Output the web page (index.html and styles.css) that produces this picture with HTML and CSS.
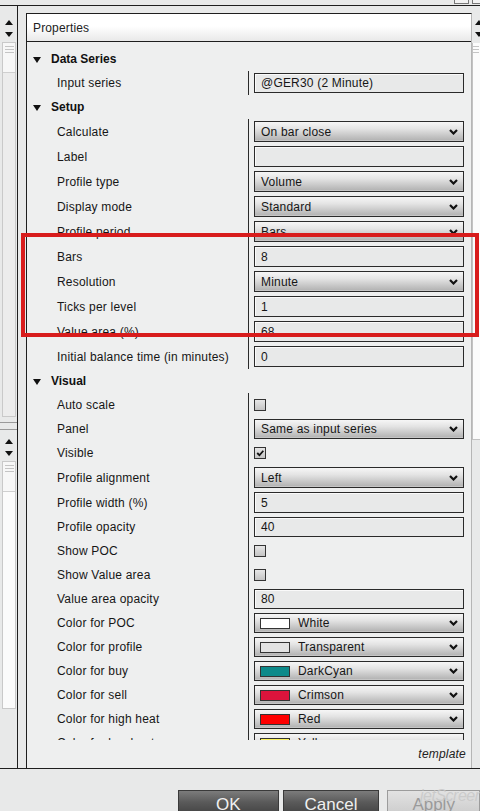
FILE: index.html
```html
<!DOCTYPE html>
<html>
<head>
<meta charset="utf-8">
<link rel="stylesheet" href="styles.css">
</head>
<body>
<div class="screen">
  <div class="titlebar"><span class="winbtn"></span><span class="winbtn"></span></div>
  <div class="workarea">
    <aside class="sidepanel">
      <div class="side-top">
        <div class="spin"><span class="tri-up"></span><span class="tri-down"></span></div>
        <div class="track"><div class="thumb"><i></i><i></i><i></i></div></div>
      </div>
      <div class="side-bottom">
        <div class="spin"><span class="tri-up"></span><span class="tri-down"></span></div>
        <div class="track white"><div class="thumb"><i></i><i></i><i></i></div></div>
      </div>
    </aside>
    <section class="props">
      <div class="props-main">
        <div class="props-header">Properties</div>
        <div class="props-grid">
          <div class="sec"><span class="tri-down big"></span>Data Series</div>
          <div class="row"><div class="lbl">Input series</div><div class="val"><div class="box">@GER30 (2 Minute)</div></div></div>
          <div class="sec"><span class="tri-down big"></span>Setup</div>
          <div class="row r25"><div class="lbl">Calculate</div><div class="val"><div class="dd"><span>On bar close</span><svg class="chev" viewBox="0 0 9 6"><polyline points="1,1 4.5,4.5 8,1"/></svg></div></div></div>
          <div class="row r25"><div class="lbl">Label</div><div class="val"><div class="box"></div></div></div>
          <div class="row r25"><div class="lbl">Profile type</div><div class="val"><div class="dd"><span>Volume</span><svg class="chev" viewBox="0 0 9 6"><polyline points="1,1 4.5,4.5 8,1"/></svg></div></div></div>
          <div class="row r25"><div class="lbl">Display mode</div><div class="val"><div class="dd"><span>Standard</span><svg class="chev" viewBox="0 0 9 6"><polyline points="1,1 4.5,4.5 8,1"/></svg></div></div></div>
          <div class="row r25"><div class="lbl">Profile period</div><div class="val"><div class="dd"><span>Bars</span><svg class="chev" viewBox="0 0 9 6"><polyline points="1,1 4.5,4.5 8,1"/></svg></div></div></div>
          <div class="row r25"><div class="lbl">Bars</div><div class="val"><div class="box">8</div></div></div>
          <div class="row r25"><div class="lbl">Resolution</div><div class="val"><div class="dd"><span>Minute</span><svg class="chev" viewBox="0 0 9 6"><polyline points="1,1 4.5,4.5 8,1"/></svg></div></div></div>
          <div class="row r25"><div class="lbl">Ticks per level</div><div class="val"><div class="box">1</div></div></div>
          <div class="row r25"><div class="lbl">Value area (%)</div><div class="val"><div class="box">68</div></div></div>
          <div class="row r25"><div class="lbl">Initial balance time (in minutes)</div><div class="val"><div class="box">0</div></div></div>
          <div class="sec"><span class="tri-down big"></span>Visual</div>
          <div class="row"><div class="lbl">Auto scale</div><div class="val"><span class="chk"></span></div></div>
          <div class="row"><div class="lbl">Panel</div><div class="val"><div class="dd"><span>Same as input series</span><svg class="chev" viewBox="0 0 9 6"><polyline points="1,1 4.5,4.5 8,1"/></svg></div></div></div>
          <div class="row"><div class="lbl">Visible</div><div class="val"><span class="chk"><svg viewBox="0 0 9 9"><polyline points="2,4.5 4,6.5 7.5,2.5"/></svg></span></div></div>
          <div class="row r25"><div class="lbl">Profile alignment</div><div class="val"><div class="dd"><span>Left</span><svg class="chev" viewBox="0 0 9 6"><polyline points="1,1 4.5,4.5 8,1"/></svg></div></div></div>
          <div class="row r25"><div class="lbl">Profile width (%)</div><div class="val"><div class="box">5</div></div></div>
          <div class="row"><div class="lbl">Profile opacity</div><div class="val"><div class="box">40</div></div></div>
          <div class="row"><div class="lbl">Show POC</div><div class="val"><span class="chk"></span></div></div>
          <div class="row"><div class="lbl">Show Value area</div><div class="val"><span class="chk"></span></div></div>
          <div class="row"><div class="lbl">Value area opacity</div><div class="val"><div class="box">80</div></div></div>
          <div class="row"><div class="lbl">Color for POC</div><div class="val"><div class="dd"><i class="sw sw-white"></i><span>White</span><svg class="chev" viewBox="0 0 9 6"><polyline points="1,1 4.5,4.5 8,1"/></svg></div></div></div>
          <div class="row"><div class="lbl">Color for profile</div><div class="val"><div class="dd"><i class="sw sw-trans"></i><span>Transparent</span><svg class="chev" viewBox="0 0 9 6"><polyline points="1,1 4.5,4.5 8,1"/></svg></div></div></div>
          <div class="row"><div class="lbl">Color for buy</div><div class="val"><div class="dd"><i class="sw sw-cyan"></i><span>DarkCyan</span><svg class="chev" viewBox="0 0 9 6"><polyline points="1,1 4.5,4.5 8,1"/></svg></div></div></div>
          <div class="row"><div class="lbl">Color for sell</div><div class="val"><div class="dd"><i class="sw sw-crimson"></i><span>Crimson</span><svg class="chev" viewBox="0 0 9 6"><polyline points="1,1 4.5,4.5 8,1"/></svg></div></div></div>
          <div class="row"><div class="lbl">Color for high heat</div><div class="val"><div class="dd"><i class="sw sw-red"></i><span>Red</span><svg class="chev" viewBox="0 0 9 6"><polyline points="1,1 4.5,4.5 8,1"/></svg></div></div></div>
          <div class="row"><div class="lbl">Color for low heat</div><div class="val"><div class="dd"><i class="sw sw-yellow"></i><span>Yellow</span><svg class="chev" viewBox="0 0 9 6"><polyline points="1,1 4.5,4.5 8,1"/></svg></div></div></div>
        </div>
        <div class="props-footer">template</div>
      </div>
      <div class="props-scroll">
        <div class="spin right"><span class="tri-up"></span><span class="tri-down"></span></div>
        <div class="vtrack"><i></i><i></i><i></i></div>
      </div>
    </section>
  </div>
  <div class="buttonbar">
    <div class="btn dark ok">OK</div>
    <div class="btn dark cancel">Cancel</div>
    <div class="btn light apply">Apply</div>
  </div>
  <div class="highlight"></div>
  <div class="watermark">jetScreenshot<sup>.com</sup></div>
</div>
</body>
</html>
```
FILE: styles.css
```css
* { box-sizing: border-box; }
html, body { margin: 0; padding: 0; }
body {
  background: #e8e9e9;
  font-family: "Liberation Sans", Arial, sans-serif;
  font-size: 12px;
  color: #161616;
}
.screen {
  position: relative;
  width: 480px;
  height: 811px;
  overflow: hidden;
  background: #e8e9e9;
}
.titlebar {
  height: 6px;
  border-bottom: 1px solid #1e1e1e;
  display: flex;
  justify-content: flex-end;
  gap: 3px;
}
.winbtn {
  width: 15px;
  height: 4px;
  border: 1px solid #777;
  border-top: none;
  background: #f2f2f2;
}
.winbtn:last-child { width: 8px; border-right: none; }
.workarea {
  display: flex;
  height: 763px;
  border-bottom: 1px solid #1e1e1e;
}
.sidepanel {
  width: 18px;
  border-right: 1px solid #1e1e1e;
  display: flex;
  flex-direction: column;
}
.side-top {
  height: 417px;
  border-bottom: 1px solid #9a9a9a;
  display: flex;
  flex-direction: column;
  padding: 8px 0 0 2px;
}
.side-bottom {
  flex: 1;
  margin-top: 6px;
  border-top: 1px solid #9a9a9a;
  display: flex;
  flex-direction: column;
  padding: 3px 0 0 2px;
}
.spin {
  height: 28px;
  display: flex;
  flex-direction: column;
  align-items: center;
  justify-content: center;
  gap: 7px;
  padding-right: 2px;
}
.tri-up, .tri-down {
  width: 0; height: 0;
  border-left: 4px solid transparent;
  border-right: 4px solid transparent;
}
.tri-up { border-bottom: 5px solid #111; }
.tri-down { border-top: 5px solid #111; }
.track {
  width: 14px;
  flex: 1;
  background: #ececec;
  border: 1px solid #c9c9c9;
  margin-bottom: 5px;
}
.side-bottom .track { flex: 0 0 248px; background: #fbfbfb; }
.thumb {
  height: 30px;
  background: #f7f7f7;
  border-bottom: 1px solid #cfcfcf;
  display: flex;
  flex-direction: column;
  align-items: center;
  gap: 2px;
  padding-top: 3px;
}
.thumb i, .vtrack i {
  display: block;
  width: 9px;
  height: 1px;
  background: #c4c4c4;
}
.props {
  flex: 1;
  margin-left: 8px;
  padding-top: 7px;
  display: flex;
}
.props-main {
  width: 446px;
  border-top: 1px solid #1e1e1e;
  border-left: 1px solid #1e1e1e;
  border-right: 1px solid #b5b5b5;
  display: flex;
  flex-direction: column;
  background: #eeefef;
}
.props-header {
  height: 28px;
  border-bottom: 1px solid #1e1e1e;
  background: linear-gradient(#ffffff 0%, #ffffff 45%, #e9e9e9 100%);
  padding-left: 6px;
  padding-top: 1px;
  line-height: 27px;
  font-size: 12px;
  color: #222;
  letter-spacing: 0.15px;
}
.props-grid {
  height: 698px;
  overflow: hidden;
  padding-top: 5px;
  letter-spacing: 0.2px;
}
.sec {
  height: 24px;
  display: flex;
  align-items: center;
  padding-left: 6px;
  font-weight: bold;
  gap: 10px;
  color: #111;
  letter-spacing: 0;
}
.tri-down.big {
  border-left-width: 4px;
  border-right-width: 4px;
  border-top-width: 6px;
  margin-top: 1px;
}
.row {
  height: 24px;
  display: grid;
  grid-template-columns: 221px 1fr;
}
.row.r25 { height: 25px; }
.lbl {
  padding-left: 30px;
  display: flex;
  align-items: center;
  white-space: nowrap;
}
.val {
  border-left: 1px solid #2a2a2a;
  display: flex;
  align-items: center;
  padding-left: 5px;
}
.box, .dd {
  width: 210px;
  height: 20px;
  border: 1px solid #2a2a2a;
  display: flex;
  align-items: center;
  padding-left: 6px;
  white-space: nowrap;
}
.r25 .box, .r25 .dd { height: 21px; }
.box {
  background: #e8e9e9;
  box-shadow: inset 1px 1px 0 #fafafa;
}
.dd {
  background: linear-gradient(#f6f6f6 0%, #e4e4e4 35%, #c4c4c4 75%, #b6b6b6 92%, #cdcdcd 100%);
  padding-right: 5px;
}
.dd span { flex: 1; }
.chev {
  width: 9px;
  height: 6px;
  fill: none;
  stroke: #111;
  stroke-width: 2.2;
}
.chk {
  width: 12px;
  height: 12px;
  border: 1px solid #333;
  background: linear-gradient(#e6e6e6, #c4c4c4);
  display: flex;
}
.chk svg {
  width: 10px;
  height: 10px;
  fill: none;
  stroke: #111;
  stroke-width: 1.6;
}
.sw {
  width: 30px;
  height: 11px;
  border: 1px solid #333;
  margin-right: 8px;
  margin-left: -1px;
}
.sw-white { background: #ffffff; }
.sw-trans { background: #e2e2e2; }
.sw-cyan { background: #0d8a8a; }
.sw-crimson { background: #dc143c; }
.sw-red { background: #ff0000; }
.sw-yellow { background: #fbf35a; }
.props-footer {
  flex: 1;
  display: flex;
  align-items: center;
  justify-content: flex-end;
  padding-right: 5px;
  font-style: italic;
  font-size: 12px;
  color: #222;
  letter-spacing: 0.2px;
}
.props-scroll {
  width: 8px;
  display: flex;
  flex-direction: column;
}
.spin.right {
  height: 28px;
  margin-top: 1px;
  padding-right: 0;
  align-items: flex-end;
  margin-right: -3px;
}
.vtrack {
  height: 397px;
  margin-top: 1px;
  background: #fbfbfb;
  border-left: 1px solid #c2c2c2;
  border-bottom: 1px solid #c2c2c2;
  display: flex;
  flex-direction: column;
  align-items: flex-start;
  gap: 2px;
  padding-top: 3px;
}
.vtrack i { width: 6px; }
.buttonbar {
  display: flex;
  padding-left: 178px;
  padding-top: 21px;
  gap: 4px;
}
.btn {
  height: 30px;
  display: flex;
  justify-content: center;
  padding-top: 4px;
  font-size: 17px;
}
.btn.dark {
  background: linear-gradient(#7c7c7c 0%, #5a5a5a 40%, #3a3a3a 100%);
  color: #f0f0f0;
  border: 1px solid #3a3a3a;
}
.ok { width: 102px; }
.cancel { width: 98px; }
.apply {
  width: 94px;
  margin-left: 4px;
  background: linear-gradient(#e2e2e2, #c8c8c8);
  border: 1px solid #9c9c9c;
  color: #9a9a9a;
}
.highlight {
  position: absolute;
  left: 21px;
  top: 233px;
  width: 458px;
  height: 104px;
  border: 4px solid #d81c1c;
}
.watermark {
  position: absolute;
  left: 420px;
  top: 787px;
  font-size: 16px;
  font-style: italic;
  color: rgba(200, 200, 200, 0.85);
  letter-spacing: -0.5px;
}
.watermark sup { font-size: 8px; }
```
